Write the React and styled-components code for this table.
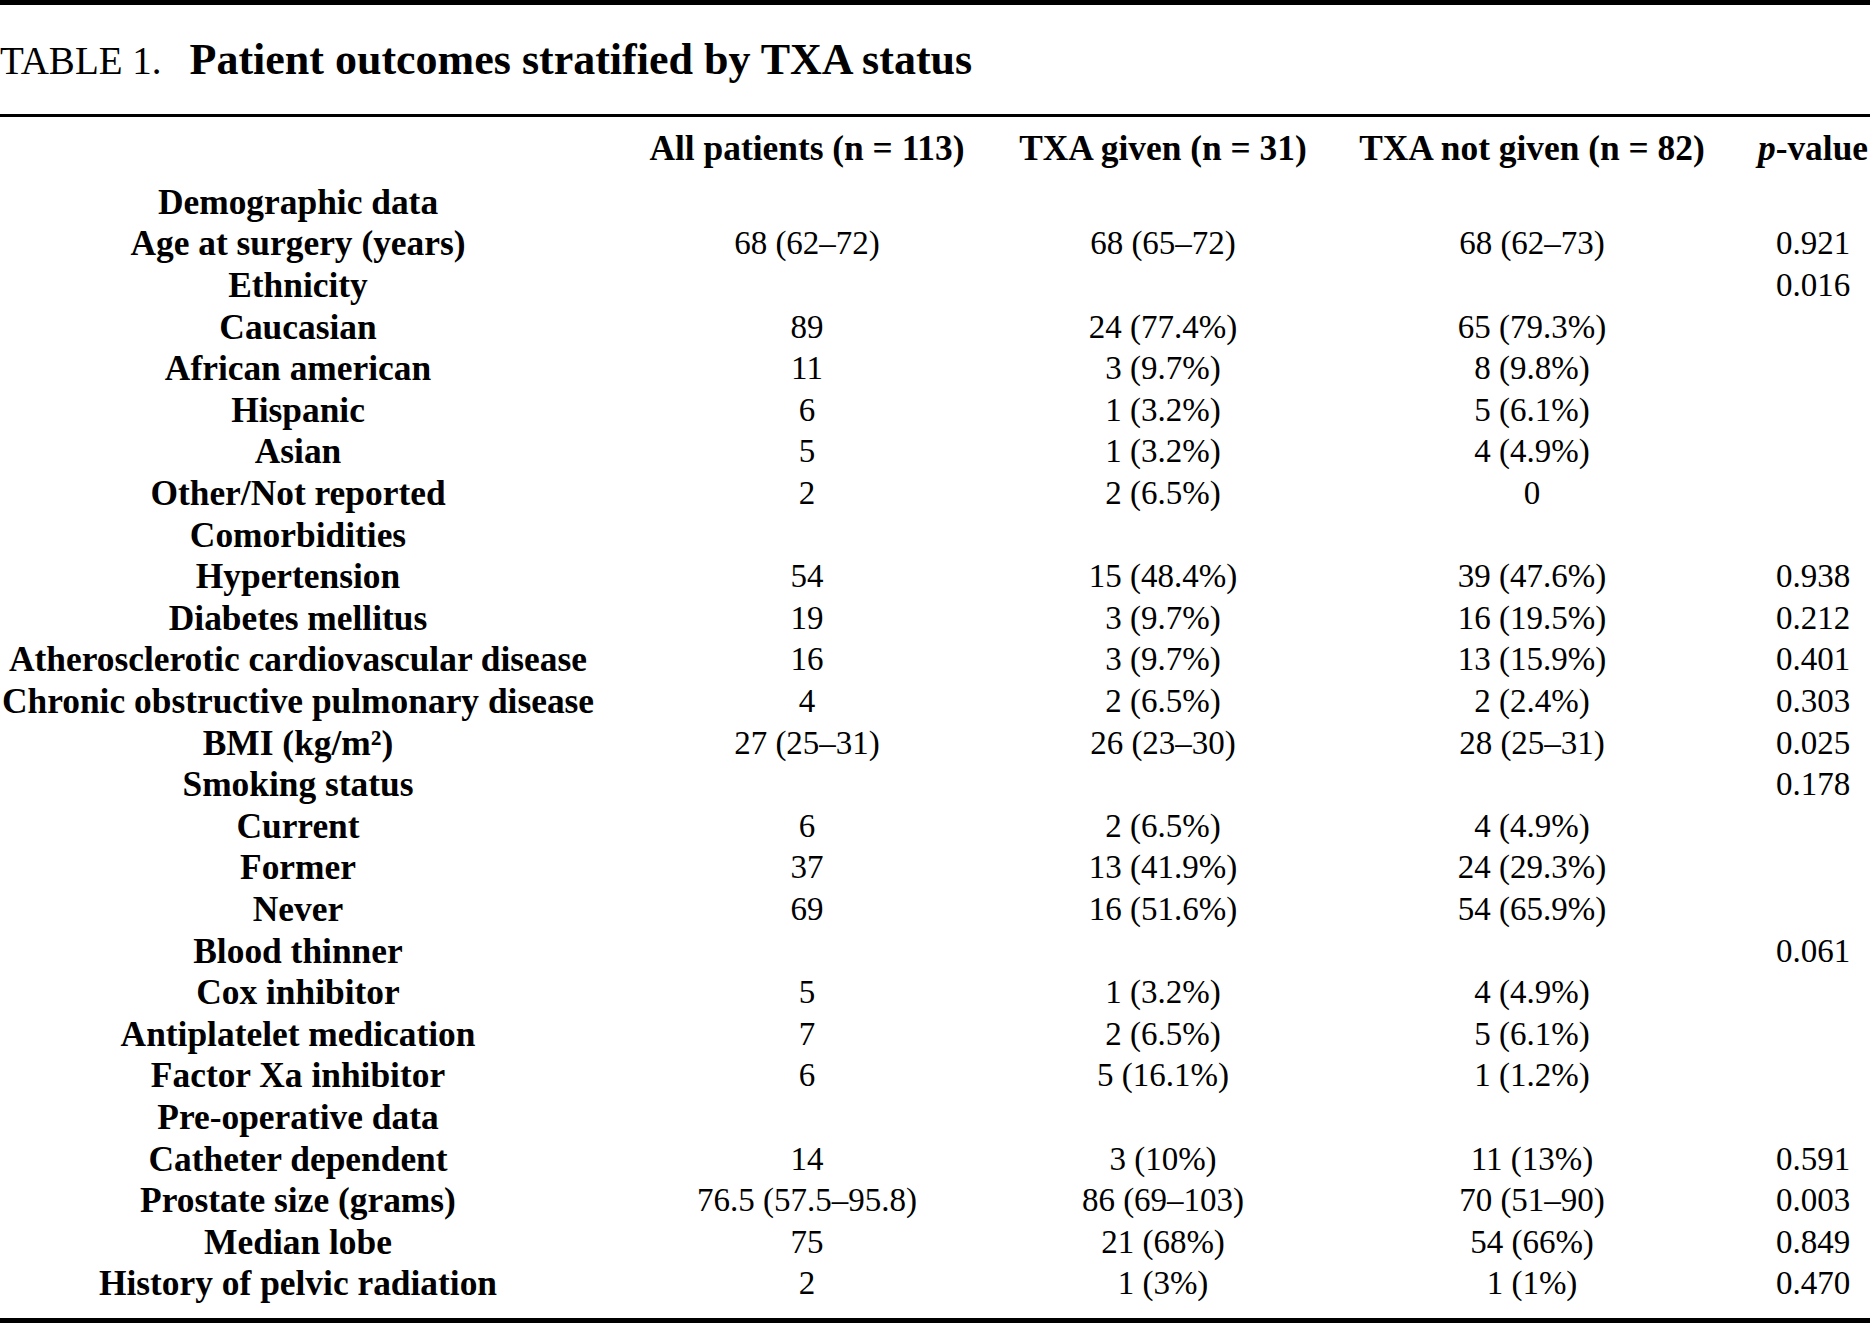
import React from 'react'
import styled, { createGlobalStyle } from 'styled-components'

const GlobalStyle = createGlobalStyle`
  html, body {
    margin: 0;
    padding: 0;
    background: #ffffff;
  }
  body {
    font-family: "Liberation Serif", "Times New Roman", serif;
    color: #000000;
  }
`

const Page = styled.div`
  width: 1870px;
  height: 1324px;
  overflow: hidden;
  display: flex;
  flex-direction: column;
  background: #ffffff;
`

const Rule = styled.div`
  height: ${p => p.$thick}px;
  background: #000000;
  flex-shrink: 0;
  margin-top: ${p => p.$top || 0}px;
`

const Caption = styled.div`
  height: 109px;
  line-height: 109px;
  font-size: 44px;
  white-space: nowrap;
`

const CaptionLabel = styled.span`
  font-size: 39px;
  font-weight: normal;
`

const CaptionTitle = styled.span`
  font-weight: bold;
  margin-left: 28px;
`

const Row = styled.div`
  display: grid;
  grid-template-columns: 596px 422px 290px 448px 114px;
  height: 41.6px;
  line-height: 41.6px;
  flex-shrink: 0;
`

const HeadRow = styled(Row)`
  margin-top: 11.2px;
  margin-bottom: 12.1px;
`

const Cell = styled.div`
  display: flex;
  justify-content: center;
  white-space: nowrap;
  font-size: ${p => (p.$bold ? 35.4 : 33)}px;
  font-weight: ${p => (p.$bold ? 'bold' : 'normal')};
`

const Italic = styled.span`
  font-style: italic;
`

const headers = ['', 'All patients (n = 113)', 'TXA given (n = 31)', 'TXA not given (n = 82)']

const rows = [
  ['Demographic data', '', '', '', ''],
  ['Age at surgery (years)', '68 (62–72)', '68 (65–72)', '68 (62–73)', '0.921'],
  ['Ethnicity', '', '', '', '0.016'],
  ['Caucasian', '89', '24 (77.4%)', '65 (79.3%)', ''],
  ['African american', '11', '3 (9.7%)', '8 (9.8%)', ''],
  ['Hispanic', '6', '1 (3.2%)', '5 (6.1%)', ''],
  ['Asian', '5', '1 (3.2%)', '4 (4.9%)', ''],
  ['Other/Not reported', '2', '2 (6.5%)', '0', ''],
  ['Comorbidities', '', '', '', ''],
  ['Hypertension', '54', '15 (48.4%)', '39 (47.6%)', '0.938'],
  ['Diabetes mellitus', '19', '3 (9.7%)', '16 (19.5%)', '0.212'],
  ['Atherosclerotic cardiovascular disease', '16', '3 (9.7%)', '13 (15.9%)', '0.401'],
  ['Chronic obstructive pulmonary disease', '4', '2 (6.5%)', '2 (2.4%)', '0.303'],
  ['BMI (kg/m²)', '27 (25–31)', '26 (23–30)', '28 (25–31)', '0.025'],
  ['Smoking status', '', '', '', '0.178'],
  ['Current', '6', '2 (6.5%)', '4 (4.9%)', ''],
  ['Former', '37', '13 (41.9%)', '24 (29.3%)', ''],
  ['Never', '69', '16 (51.6%)', '54 (65.9%)', ''],
  ['Blood thinner', '', '', '', '0.061'],
  ['Cox inhibitor', '5', '1 (3.2%)', '4 (4.9%)', ''],
  ['Antiplatelet medication', '7', '2 (6.5%)', '5 (6.1%)', ''],
  ['Factor Xa inhibitor', '6', '5 (16.1%)', '1 (1.2%)', ''],
  ['Pre-operative data', '', '', '', ''],
  ['Catheter dependent', '14', '3 (10%)', '11 (13%)', '0.591'],
  ['Prostate size (grams)', '76.5 (57.5–95.8)', '86 (69–103)', '70 (51–90)', '0.003'],
  ['Median lobe', '75', '21 (68%)', '54 (66%)', '0.849'],
  ['History of pelvic radiation', '2', '1 (3%)', '1 (1%)', '0.470'],
]

export default function App() {
  return (
    <Page>
      <GlobalStyle />
      <Rule $thick={5} />
      <Caption>
        <CaptionLabel>TABLE 1.</CaptionLabel>
        <CaptionTitle>Patient outcomes stratified by TXA status</CaptionTitle>
      </Caption>
      <Rule $thick={3} />

      <HeadRow>
        {headers.map((h, i) => (
          <Cell $bold key={i}>{h}</Cell>
        ))}
        <Cell $bold>
          <span><Italic>p</Italic>-value</span>
        </Cell>
      </HeadRow>

      {rows.map((r, i) => (
        <Row key={i}>
          {r.map((c, j) => (
            <Cell $bold={j === 0} key={j}>{c}</Cell>
          ))}
        </Row>
      ))}

      <Rule $thick={5} $top={12.9} />
    </Page>
  )
}
